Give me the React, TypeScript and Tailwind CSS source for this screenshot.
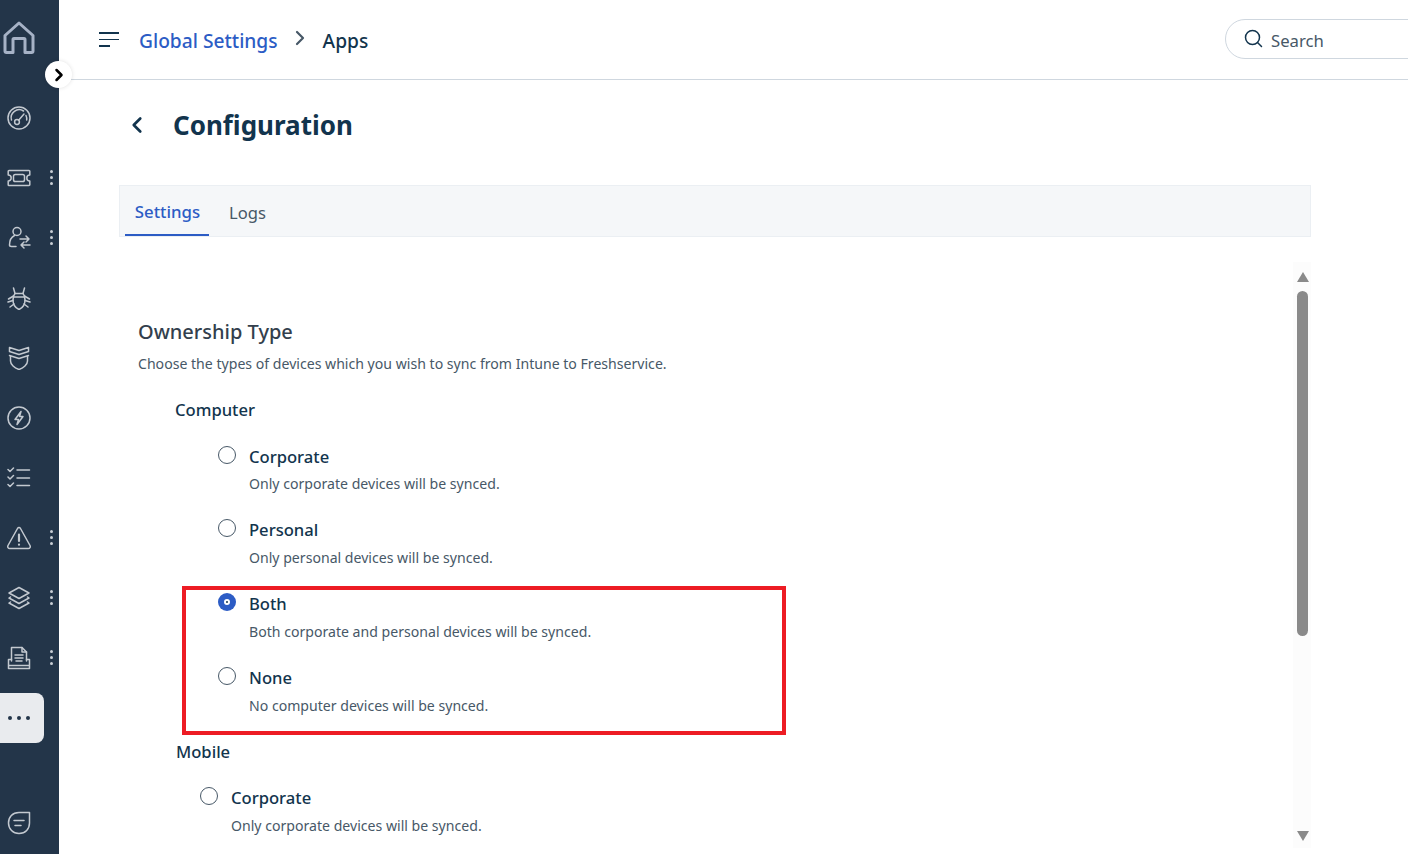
import React from "react";
import { ChevronLeft, ChevronRight } from "lucide-react";

const S = { fill: "none", stroke: "currentColor", strokeWidth: 1.5, strokeLinecap: "round", strokeLinejoin: "round" } as const;

const Icons: Record<string, React.ReactNode> = {
  gauge: (<><circle cx="12" cy="12" r="11" /><path d="M4.5 14a8 8 0 0 1 12-9" /><circle cx="10" cy="16" r="2.4" /><path d="M11.6 14.2 17 8" /><path d="M19 9.5a8 8 0 0 1 .7 4.5" /></>),
  ticket: (<><path d="M2 4.500h20a.8.8 0 0 1 .8.8v3.700a3 3 0 0 0 0 6v3.700a.8.8 0 0 1-.8.8H2a.8.8 0 0 1-.8-.8V15a3 3 0 0 0 0-6V5.300a.8.800 0 0 1 .8-.8Z" /><rect x="6.500" y="8.500" width="11" height="7" rx="1.800" /></>),
  user: (<><circle cx="10" cy="5.500" r="4" /><path d="M7.500 9.500C4.500 11 2.500 15 2.500 19c0 1.200 1 1.500 2 1.500H9" /><path d="M13 13h9M19 10l3 3-3 3M23 19h-9M17 16l-3 3 3 3" /></>),
  bug: (<><path d="M12 23.500c-3.500-1.500-6-4.500-6-9.500 0-3 .500-5 2-6.500h8c1.500 1.500 2 3.500 2 6.500 0 5-2.500 8-6 9.500Z" /><path d="M8 7.500 6.500 2M16 7.500 17.500 2M6.500 10 1.500 13M17.500 10l5 3M6 14.500 1 16M18 14.500l5 1.500M7 18l-4 3M17 18l4 3M6.500 11h11" /></>),
  shield: (<><path d="M2.500 5.500V1.500L12 4.500l9.500-3v4L12 8.500Z" /><path d="M2.500 9.500 12 12.500l9.500-3" /><path d="M3.500 10v5c0 3.500 4 7 8.500 8.500 4.500-1.500 8.500-5 8.500-8.500v-5" /></>),
  bolt: (<><circle cx="12" cy="12" r="11" /><path d="M14 5.500 8 13.500h3.500L10 18.500l6-8h-3.500Z" /></>),
  checks: (<><path d="M1 3.500 3 5.500 6.500 2M1 11l2 2 3.500-3.500M1 18.500l2 2 3.500-3.500" /><path d="M10 4h12.500M10 12h12.500M10 19.500h12.500" /></>),
  alert: (<><path d="M10.500 2.500 1 19.500c-.800 1.500.200 3 1.800 3h18.400c1.600 0 2.600-1.500 1.800-3L13.500 2.500c-.700-1.300-2.300-1.300-3 0Z" /><path d="M12 8.500v6.500M12 18.500v.2" strokeWidth="2.200" /></>),
  layers: (<><path d="M12 1.500 22 7l-10 5.500L2 7Z" /><path d="M3.500 11 2 12l10 5.500L22 12l-1.500-1" /><path d="M3.500 16 2 17l10 5.500L22 17l-1.500-1" /></>),
  inbox: (<><path d="M4.500 15V1.500H15l4.500 4.500v9" /><path d="M15 1.500V6h4.500M8 9h8M8 12h8M9 15h6" /><path d="M1.500 13.500h3M19.500 13.500h3v9h-21v-9M1.500 19.500h21" /></>),
  chat: (<><path d="M22.500 1.500H12C5.500 1.500 1.500 6 1.500 12c0 6 4.500 10.500 10.500 10.500 6.500 0 10.500-4.500 10.500-10.500Z" /><path d="M7 9.500h10M8 14.500h6" /></>),
};

function NavIcon({ name, size = 24 }: { name: string; size?: number }) {
  return (
    <svg width={size} height={size} viewBox="0 0 24 24" {...S} className="text-[#c3c9d0]">
      {Icons[name]}
    </svg>
  );
}

function Dots() {
  return (
    <span className="flex flex-col gap-[3px]">
      <span className="h-[3px] w-[3px] rounded-full bg-[#c9ced5]" />
      <span className="h-[3px] w-[3px] rounded-full bg-[#c9ced5]" />
      <span className="h-[3px] w-[3px] rounded-full bg-[#c9ced5]" />
    </span>
  );
}

function NavItem({ name, dots }: { name: string; dots?: boolean }) {
  return (
    <div className="relative flex h-[60px] w-full items-center pl-[7px]">
      <NavIcon name={name} />
      {dots && <span className="ml-[18.500px] -mt-[1px]"><Dots /></span>}
    </div>
  );
}

function Sidebar() {
  return (
    <aside className="relative flex h-[854px] w-[59px] shrink-0 flex-col bg-[#233549]">
      <div className="flex h-[88px] items-start pl-[3px] pt-[21px]">
        <svg width="32" height="34" viewBox="0 0 32 34" fill="none" stroke="#a6b2c6" strokeWidth="3" strokeLinejoin="round">
          <path d="M2 14.500 16 2l14 12.500V30a1.500 1.500 0 0 1-1.500 1.500H22V18.500a1 1 0 0 0-1-1H11a1 1 0 0 0-1 1v13H3.500A1.500 1.500 0 0 1 2 30Z" />
        </svg>
      </div>
      <NavItem name="gauge" />
      <NavItem name="ticket" dots />
      <NavItem name="user" dots />
      <NavItem name="bug" />
      <NavItem name="shield" />
      <NavItem name="bolt" />
      <NavItem name="checks" />
      <NavItem name="alert" dots />
      <NavItem name="layers" dots />
      <NavItem name="inbox" dots />
      <div className="mt-[5px] flex h-[50px] w-[44px] items-center justify-center gap-[5px] rounded-r-[8px] bg-[#e9ebee] pr-[6px] pb-[1px]">
        <span className="h-[4px] w-[4px] rounded-full bg-[#233549]" />
        <span className="h-[4px] w-[4px] rounded-full bg-[#233549]" />
        <span className="h-[4px] w-[4px] rounded-full bg-[#233549]" />
      </div>
      <div className="mt-auto flex h-[61px] items-start pl-[7px] pt-[18px]">
        <NavIcon name="chat" />
      </div>
      <div className="absolute left-[45px] top-[61px] z-10 flex h-[27px] w-[27px] items-center justify-center rounded-full bg-white pl-[1px] shadow-[0_0_4px_rgba(0,0,0,0.12)]">
        <ChevronRight size={20} strokeWidth={3} className="text-black" />
      </div>
    </aside>
  );
}

function Radio({ checked }: { checked?: boolean }) {
  return checked ? (
    <span className="mt-[2px] flex h-[18px] w-[18px] shrink-0 items-center justify-center rounded-full bg-[#2c5cc5]">
      <span className="h-[6px] w-[6px] rounded-full border-2 border-white bg-[#12344d]" />
    </span>
  ) : (
    <span className="mt-[2px] h-[18px] w-[18px] shrink-0 rounded-full border border-[#475867] bg-white" />
  );
}

function Option({ label, desc, checked, nudge }: { label: string; desc: string; checked?: boolean; nudge?: boolean }) {
  return (
    <div className={nudge ? "flex h-[74px] gap-[13px] pt-px" : "flex h-[74px] gap-[13px]"}>
      <Radio checked={checked} />
      <div className="flex flex-col">
        <span className="mt-[1px] h-[24px] text-[16.600px] leading-[24px] font-medium text-[#12344d]">{label}</span>
        <span className={nudge ? "mt-[5px] text-[14.100px] leading-[20px] text-[#475867]" : "mt-[6px] text-[14.100px] leading-[20px] text-[#475867]"}>{desc}</span>
      </div>
    </div>
  );
}

export default function App() {
  return (
    <div className="relative flex h-[854px] w-[1408px] overflow-hidden bg-white font-['Noto_Sans','Open_Sans',sans-serif]">
      <Sidebar />
      <main className="flex min-w-0 flex-1 flex-col">
        <header className="flex h-[80px] shrink-0 items-center border-b border-[#cfd7df] pl-[40px] pb-[2px]">
          <svg width="20" height="15" viewBox="0 0 20 15" className="mt-[2px] text-[#12344d]" fill="currentColor">
            <rect x="0" y="0" width="20" height="2" />
            <rect x="0" y="7" width="20" height="1" />
            <rect x="0" y="13" width="11" height="2" />
          </svg>
          <span className="ml-[20px] mt-[6px] text-[19.200px] font-medium text-[#2c5cc5]">Global Settings</span>
          <ChevronRight size={24} strokeWidth={2.200} className="ml-[10px] mb-[1px] text-[#475867]" />
          <span className="ml-[11px] mt-[6px] text-[19.200px] font-medium text-[#12344d]">Apps</span>
          <div className="ml-auto flex h-[40px] w-[190px] shrink-0 translate-x-[7px] items-center rounded-l-[20px] border border-[#cfd7df] pl-[18px]">
            <svg width="19" height="19" viewBox="0 0 19 19" fill="none" stroke="#12344d" strokeWidth="1.500" strokeLinecap="round">
              <circle cx="8.500" cy="8.500" r="7" />
              <path d="m13.500 13.500 4 4" />
            </svg>
            <span className="ml-[8px] mt-[4px] text-[16.700px] text-[#475867]">Search</span>
          </div>
        </header>

        <div className="flex h-[90px] shrink-0 items-center pl-[65px]">
          <ChevronLeft size={26} strokeWidth={2.500} className="text-[#12344d]" />
          <h1 className="ml-[23px] text-[26px] font-bold text-[#12344d]">Configuration</h1>
        </div>

        <div className="ml-[60px] mt-[15px] flex h-[52px] w-[1192px] shrink-0 items-end border border-[#ebeff3] bg-[#f5f7f9] pl-[5px]">
          <div className="flex h-[50px] w-[84px] items-center justify-center border-b-2 border-[#2c5cc5] pt-[4px] pl-[1px] text-[16.800px] font-medium text-[#2c5cc5]">Settings</div>
          <div className="flex h-[50px] items-center pl-[20px] pt-[4px] text-[16.600px] text-[#475867]">Logs</div>
        </div>

        <div className="ml-[60px] mt-[25px] flex min-h-0 w-[1192px] flex-1">
          <div className="min-w-0 flex-1 pl-[19px] pt-[56px]">
            <h2 className="text-[20px] leading-[28px] font-medium text-[#333f4d]">Ownership Type</h2>
            <p className="mt-[8px] text-[14.100px] leading-[20px] text-[#475867]">Choose the types of devices which you wish to sync from Intune to Freshservice.</p>
            <div className="ml-[37px] mt-[24px] text-[16.600px] leading-[24px] font-medium text-[#12344d]">Computer</div>
            <div className="ml-[80px] mt-[21px] flex flex-col">
              <Option label="Corporate" desc="Only corporate devices will be synced." nudge />
              <Option label="Personal" desc="Only personal devices will be synced." />
              <Option label="Both" desc="Both corporate and personal devices will be synced." checked />
              <Option label="None" desc="No computer devices will be synced." />
            </div>
            <div className="ml-[38px] mt-[1px] text-[16.600px] leading-[24px] font-medium text-[#12344d]">Mobile</div>
            <div className="ml-[62px] mt-[21px]">
              <Option label="Corporate" desc="Only corporate devices will be synced." />
            </div>
          </div>
          <div className="flex h-[586px] w-[18px] shrink-0 flex-col items-center bg-[#fcfcfc] pt-[10px] pl-[1px]">
            <span className="h-0 w-0 border-x-[6.500px] border-b-[10px] border-x-transparent border-b-[#8a8a8a]" />
            <span className="mt-[9px] h-[345px] w-[11px] rounded-full bg-[#8a8a8a]" />
            <span className="mt-auto mb-[7px] h-0 w-0 border-x-[6.500px] border-t-[10px] border-x-transparent border-t-[#8a8a8a]" />
          </div>
        </div>
      </main>
      <div className="pointer-events-none absolute left-[182px] top-[586px] h-[149px] w-[604px] border-4 border-[#ed1c24]" />
    </div>
  );
}
